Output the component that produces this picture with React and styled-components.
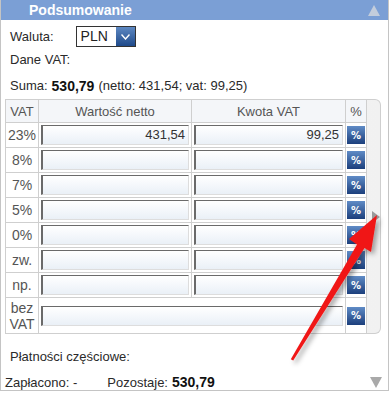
import React from "react"
import styled, { createGlobalStyle } from "styled-components"

const Global = createGlobalStyle`
  body {
    margin: 0;
    background: #fff;
    font-family: "Liberation Sans", Arial, sans-serif;
    font-size: 13px;
    color: #2a2a2a;
  }
`

const Page = styled.div`
  position: relative;
  width: 391px;
  height: 397px;
`

const Panel = styled.div`
  width: 387px;
  height: 390px;
  border: 1px solid #c4c4c4;
  border-top: none;
  display: flex;
  flex-direction: column;
`

const Header = styled.div`
  height: 22px;
  background: #7b9fd5;
  display: flex;
  align-items: center;
  justify-content: space-between;
  padding: 0 8px 0 28px;
  color: #fff;
  font-weight: bold;
  font-size: 14px;
`

const Tri = styled.span`
  width: 0;
  height: 0;
  border-left: 6px solid transparent;
  border-right: 6px solid transparent;
  ${p => p.down
    ? `border-top: 11px solid ${p.color};`
    : `border-bottom: 11px solid ${p.color};`}
`

const Body = styled.div`
  flex: 1;
  display: flex;
  flex-direction: column;
`

const Line = styled.div`
  display: flex;
  align-items: center;
  padding-left: ${p => p.pad ?? 9}px;
  margin-top: ${p => p.mt}px;
  height: ${p => p.h ?? 16}px;
  line-height: 16px;
`

const Select = styled.div`
  margin-left: 22px;
  width: 58px;
  height: 19px;
  border: 1px solid #333;
  display: flex;
  align-items: stretch;
`

const SelectText = styled.span`
  flex: 1;
  padding-left: 4px;
  font-size: 14px;
  line-height: 19px;
  color: #222;
`

const SelectArrow = styled.span`
  width: 19px;
  background: linear-gradient(#5d88c2, #1f4a8a);
  display: flex;
  align-items: center;
  justify-content: center;
`

const Bold = styled.b`
  font-size: 14px;
  margin: 0 4px;
  color: #111;
`

const TableBox = styled.div`
  margin: 5px 0 0 4px;
  width: 375px;
  display: flex;
  border: 1px solid #cfcfcf;
  border-left: none;
  border-radius: 0 6px 6px 0;
  background: linear-gradient(90deg, #f8f8f8, #f1f1f1);
  overflow: hidden;
`

const Table = styled.table`
  border-collapse: collapse;
  width: 358px;
  background: #fff;
  table-layout: fixed;
  td, th {
    border: 1px solid #cfcfcf;
    padding: 0;
  }
  tr:first-child th { border-top: none; }
  tr:last-child td { border-bottom: none; }
`

const Th = styled.th`
  height: 22px;
  font-weight: normal;
  color: #555;
  font-size: 13px;
  background: #f4f6f9;
  width: ${p => p.w}px;
`

const Rate = styled.td`
  height: ${p => p.h ?? 24}px;
  text-align: center;
  color: #555;
  font-size: 14px;
  line-height: 16px;
`

const Cell = styled.td`
  padding: 0 2px !important;
`

const Input = styled.div`
  height: 18px;
  border: 1px solid #ddd;
  border-top: 1px solid #6a6a6a;
  border-left: 2px solid #6a6a6a;
  background: linear-gradient(#ffffff, #eaf0f7);
  text-align: right;
  padding-right: 3px;
  line-height: 18px;
  font-size: 13px;
  color: #333;
`

const PctCell = styled.td`
  text-align: center;
  vertical-align: middle;
`

const PctBtn = styled.span`
  display: inline-flex;
  width: 18px;
  height: 18px;
  align-items: center;
  justify-content: center;
  background: linear-gradient(#5f8bc6, #1c3f7c);
  color: #fff;
  font-size: 10px;
  font-weight: bold;
  font-family: "DejaVu Sans", sans-serif;
`

const Gutter = styled.div`
  flex: 1;
  display: flex;
  align-items: center;
  justify-content: center;
`

const RightTri = styled.span`
  width: 0;
  height: 0;
  border-top: 6px solid transparent;
  border-bottom: 6px solid transparent;
  border-left: 8px solid #9a9a9a;
  margin-left: 4px;
`

const Footer = styled.div`
  display: flex;
  align-items: center;
  margin-top: 9px;
  padding: 0 6px 0 4px;
  height: 16px;
`

const FooterGap = styled.span`
  width: ${p => p.w}px;
`

const Spacer = styled.span`
  flex: 1;
`

const Overlay = styled.svg`
  position: absolute;
  left: 0;
  top: 0;
  pointer-events: none;
`

const rows = [
  { rate: "23%", net: "431,54", vat: "99,25" },
  { rate: "8%" },
  { rate: "7%" },
  { rate: "5%" },
  { rate: "0%" },
  { rate: "zw." },
  { rate: "np." },
]

export default function App() {
  return (
    <Page>
      <Global />
      <Panel>
        <Header>
          <span>Podsumowanie</span>
          <Tri color="#c3cddc" />
        </Header>
        <Body>
          <Line mt={6} h={21}>
            Waluta:
            <Select>
              <SelectText>PLN</SelectText>
              <SelectArrow>
                <svg width="9" height="6" viewBox="0 0 9 6">
                  <path d="M0.5 0.5 L4.5 5 L8.5 0.5" fill="none" stroke="#fff" strokeWidth="1.4" />
                </svg>
              </SelectArrow>
            </Select>
          </Line>
          <Line mt={5}>Dane VAT:</Line>
          <Line mt={10}>
            Suma:<Bold>530,79</Bold>(netto: 431,54; vat: 99,25)
          </Line>
          <TableBox>
            <Table>
              <tbody>
                <tr>
                  <Th w={32}>VAT</Th>
                  <Th w={152}>Wartość netto</Th>
                  <Th w={153}>Kwota VAT</Th>
                  <Th w={20}>%</Th>
                </tr>
                {rows.map(r => (
                  <tr key={r.rate}>
                    <Rate>{r.rate}</Rate>
                    <Cell><Input>{r.net}</Input></Cell>
                    <Cell><Input>{r.vat}</Input></Cell>
                    <PctCell><PctBtn>%</PctBtn></PctCell>
                  </tr>
                ))}
                <tr>
                  <Rate h={35}>bez<br />VAT</Rate>
                  <Cell colSpan={2}><Input /></Cell>
                  <PctCell><PctBtn>%</PctBtn></PctCell>
                </tr>
              </tbody>
            </Table>
            <Gutter>
              <RightTri />
            </Gutter>
          </TableBox>
          <Line mt={15}>Płatności częściowe:</Line>
          <Footer>
            <span>Zapłacono: -</span>
            <FooterGap w={30} />
            <span>Pozostaje:</span>
            <Bold>530,79</Bold>
            <Spacer />
            <Tri down color="#a9a9a9" />
          </Footer>
        </Body>
      </Panel>
      <Overlay width="391" height="397" viewBox="0 0 391 397">
        <defs>
          <filter id="sh" x="-20%" y="-20%" width="140%" height="140%">
            <feDropShadow dx="3" dy="3" stdDeviation="2.5" floodColor="#000" floodOpacity="0.35" />
          </filter>
        </defs>
        <polygon
          points="290.8,359.2 357,244.5 349,239 377,215 371,252 364.5,248 293.2,360.6"
          fill="#f01818"
          filter="url(#sh)"
        />
      </Overlay>
    </Page>
  )
}
